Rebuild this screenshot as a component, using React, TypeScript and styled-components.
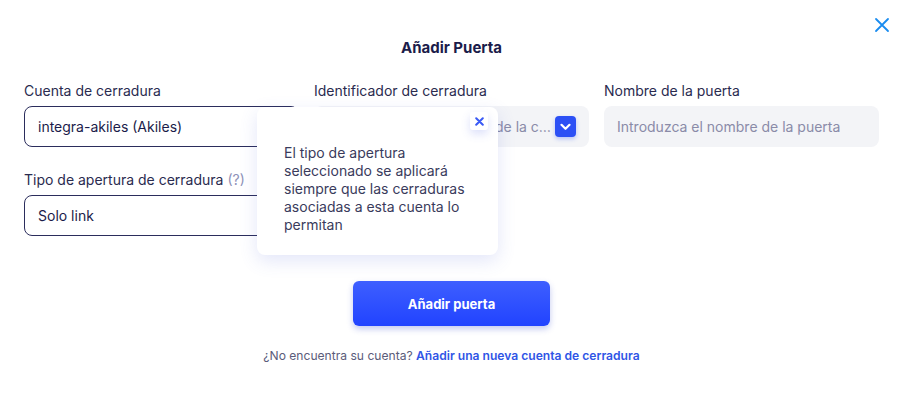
import React from "react";
import styled, { createGlobalStyle } from "styled-components";

const Global = createGlobalStyle`
  html, body { margin: 0; padding: 0; background: #ffffff; }
  body { font-family: Inter, "Noto Sans", Arial, sans-serif; -webkit-font-smoothing: antialiased; }
  * { box-sizing: border-box; }
`;

const Modal = styled.div`
  width: 901px;
  height: 405px;
  padding-left: 2px;
  background: #fff;
  display: flex;
  flex-direction: column;
  align-items: center;
`;

const TopBar = styled.div`
  width: 100%;
  height: 34px;
  padding: 17px 11px 0 0;
  display: flex;
  justify-content: flex-end;
`;

const CloseButton = styled.button`
  width: 16px;
  height: 16px;
  padding: 0;
  border: none;
  background: none;
  display: flex;
  cursor: pointer;
`;

const Title = styled.h2`
  margin: 4px 0 0;
  font-size: 15px;
  line-height: 20px;
  font-weight: 700;
  color: #1b1c4a;
`;

const Form = styled.div`
  position: relative;
  margin-top: 23px;
  width: 855px;
  display: grid;
  grid-template-columns: repeat(3, 275px);
  column-gap: 15px;
  row-gap: 23px;
`;

const Field = styled.div`
  display: flex;
  flex-direction: column;
  gap: 5px;
`;

const Label = styled.label`
  font-size: 14px;
  line-height: 20px;
  color: #2a2b4f;
  white-space: nowrap;
`;

const Hint = styled.span`
  color: #8d91b8;
`;

const Box = styled.div<{ $variant: "outlined" | "filled" }>`
  height: 41px;
  border-radius: 8px;
  display: flex;
  align-items: center;
  padding: 0 13px;
  font-size: 14px;
  overflow: hidden;
  ${(p) =>
    p.$variant === "outlined"
      ? `border: 1px solid #2b2d5c; background: #fff; color: #1b1c4a;`
      : `border: none; background: #f3f4f7; color: #8a8ba8;`}
`;

const BoxText = styled.span<{ $inset?: number }>`
  flex: 1;
  min-width: 0;
  padding-left: ${(p) => p.$inset ?? 0}px;
  white-space: nowrap;
  overflow: hidden;
  text-overflow: ellipsis;
`;

const ChevronButton = styled.span`
  flex: none;
  margin-left: 3px;
  width: 21px;
  height: 21px;
  border-radius: 4px;
  background: #2c50f5;
  box-shadow: 0 2px 4px rgba(44, 80, 245, 0.3);
  display: flex;
  align-items: center;
  justify-content: center;
`;

const Tooltip = styled.div`
  position: absolute;
  left: 233px;
  top: 26px;
  width: 241px;
  height: 148px;
  background: #fff;
  border-radius: 8px;
  box-shadow: 0 6px 18px rgba(80, 100, 220, 0.16);
  padding: 5px 10px 0 27px;
  display: flex;
  flex-direction: column;
`;

const TooltipHead = styled.div`
  display: flex;
  justify-content: flex-end;
`;

const TooltipClose = styled.span`
  width: 18px;
  height: 18px;
  background: #fff;
  border-radius: 3px;
  box-shadow: 0 4px 10px rgba(80, 100, 230, 0.2);
  display: flex;
  align-items: center;
  justify-content: center;
`;

const TooltipText = styled.p`
  margin: 14px 0 0;
  font-size: 14px;
  line-height: 18px;
  color: #3a3b5c;
  padding-right: 12px;
`;

const PrimaryButton = styled.button`
  margin-top: 45px;
  width: 197px;
  height: 45px;
  border: none;
  border-radius: 6px;
  background: linear-gradient(180deg, #3e5fff 0%, #2143ff 100%);
  box-shadow: 0 3px 6px rgba(40, 60, 200, 0.28);
  color: #fff;
  font-family: inherit;
  font-size: 13px;
  font-weight: 700;
  cursor: pointer;
`;

const Footer = styled.p`
  margin: 20px 0 0;
  font-size: 12.1px;
  line-height: 20px;
  color: #5b5c7a;
`;

const Link = styled.a`
  color: #2f55e6;
  font-weight: 600;
  text-decoration: none;
`;

export default function App() {
  return (
    <>
      <Global />
      <Modal>
        <TopBar>
          <CloseButton aria-label="Cerrar">
            <svg width="16" height="16" viewBox="0 0 16 16">
              <path d="M2 2 L14 14 M14 2 L2 14" stroke="#1a8cf0" strokeWidth="1.8" strokeLinecap="round" />
            </svg>
          </CloseButton>
        </TopBar>
        <Title>Añadir Puerta</Title>
        <Form>
          <Field>
            <Label>Cuenta de cerradura</Label>
            <Box $variant="outlined">
              <BoxText>integra-akiles (Akiles)</BoxText>
            </Box>
          </Field>
          <Field>
            <Label>Identificador de cerradura</Label>
            <Box $variant="filled">
              <BoxText $inset={4}>Seleccione identificador de la cerradura</BoxText>
              <ChevronButton>
                <svg width="11" height="8" viewBox="0 0 11 8">
                  <path d="M1.5 1.8 L5.5 5.8 L9.5 1.8" stroke="#fff" strokeWidth="2.2" fill="none" strokeLinecap="round" strokeLinejoin="round" />
                </svg>
              </ChevronButton>
            </Box>
          </Field>
          <Field>
            <Label>Nombre de la puerta</Label>
            <Box $variant="filled">
              <BoxText>Introduzca el nombre de la puerta</BoxText>
            </Box>
          </Field>
          <Field>
            <Label>
              Tipo de apertura de cerradura <Hint>(?)</Hint>
            </Label>
            <Box $variant="outlined">
              <BoxText>Solo link</BoxText>
            </Box>
          </Field>
          <Tooltip>
            <TooltipHead>
              <TooltipClose>
                <svg width="9" height="9" viewBox="0 0 9 9">
                  <path d="M1.2 1.2 L7.8 7.8 M7.8 1.2 L1.2 7.8" stroke="#3a5af5" strokeWidth="2" strokeLinecap="round" />
                </svg>
              </TooltipClose>
            </TooltipHead>
            <TooltipText>
              El tipo de apertura seleccionado se aplicará siempre que las cerraduras asociadas a esta cuenta lo permitan
            </TooltipText>
          </Tooltip>
        </Form>
        <PrimaryButton>Añadir puerta</PrimaryButton>
        <Footer>
          ¿No encuentra su cuenta? <Link href="#">Añadir una nueva cuenta de cerradura</Link>
        </Footer>
      </Modal>
    </>
  );
}
